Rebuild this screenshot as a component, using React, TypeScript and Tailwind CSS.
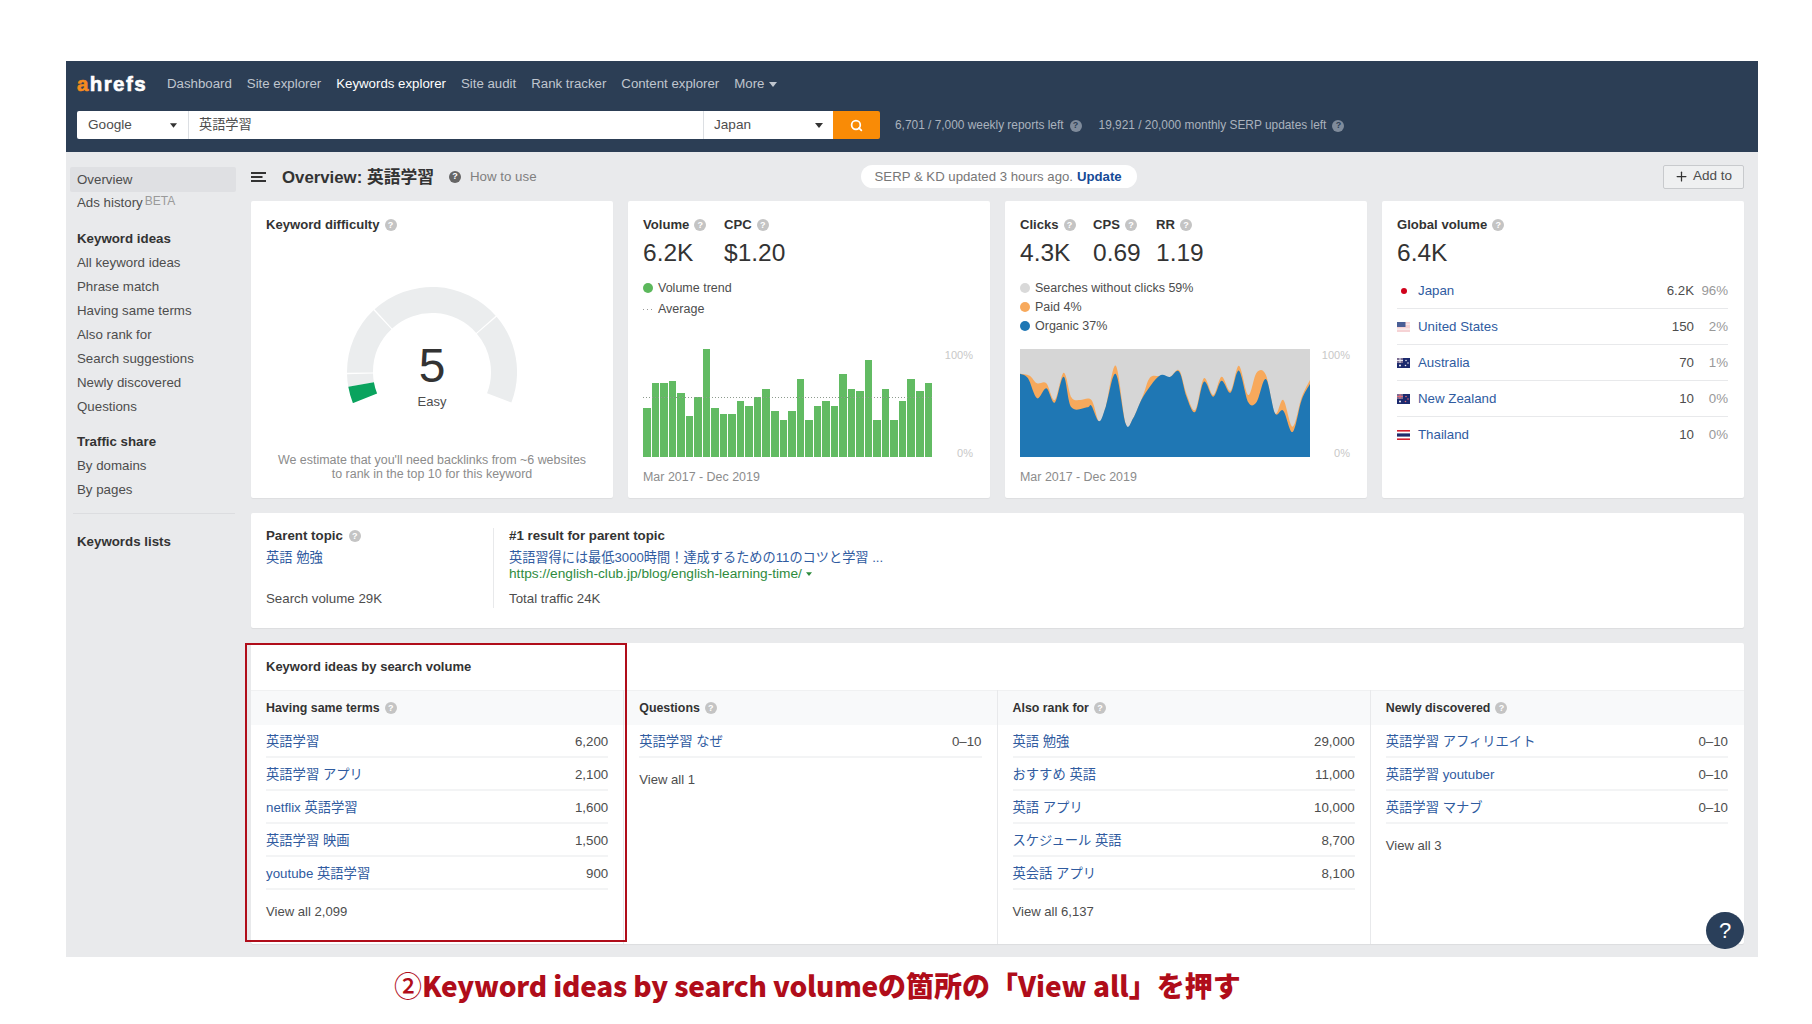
import { Search, Plus } from 'lucide-react'

const bars = [625, 550, 550, 543, 580, 648, 590, 447, 625, 642, 642, 602, 618, 590, 567, 632, 661, 632, 538, 661, 618, 602, 618, 521, 567, 573, 480, 661, 567, 661, 602, 538, 573, 550]

const organic: [number, number][] = [[61, 521], [85, 535], [112, 595], [140, 565], [165, 608], [192, 530], [215, 622], [262, 622], [275, 617], [298, 664], [318, 620], [348, 522], [378, 672], [400, 655], [430, 590], [478, 528], [510, 531], [538, 515], [560, 590], [586, 636], [612, 545], [640, 590], [665, 542], [692, 578], [717, 512], [745, 607], [770, 606], [798, 537], [825, 640], [850, 632], [878, 696], [905, 600], [930, 552]]
const paid: [number, number][] = [[61, 521], [90, 527], [112, 550], [140, 550], [165, 600], [192, 518], [215, 592], [240, 600], [275, 600], [298, 664], [318, 620], [348, 497], [378, 672], [400, 655], [430, 585], [450, 533], [478, 528], [510, 531], [538, 511], [560, 582], [586, 630], [612, 535], [640, 585], [665, 530], [692, 572], [717, 497], [745, 585], [770, 518], [798, 525], [825, 640], [850, 600], [878, 680], [905, 592], [930, 540]]

// smooth closed area from a list of top points
const areaPath = (pts: [number, number][]) => {
  let d = `M61 771 L${pts[0][0]} ${pts[0][1]}`
  for (let i = 0; i < pts.length - 1; i++) {
    const p0 = pts[Math.max(i - 1, 0)]
    const p1 = pts[i]
    const p2 = pts[i + 1]
    const p3 = pts[Math.min(i + 2, pts.length - 1)]
    d += ` C${p1[0] + (p2[0] - p0[0]) / 6} ${p1[1] + (p2[1] - p0[1]) / 6} ${p2[0] - (p3[0] - p1[0]) / 6} ${p2[1] - (p3[1] - p1[1]) / 6} ${p2[0]} ${p2[1]}`
  }
  return d + ' L930 771 Z'
}

const arcPath = (from: number, to: number) => {
  const pt = (r: number, a: number) => {
    const t = (a * Math.PI) / 180
    return `${85 + r * Math.cos(t)} ${85 + r * Math.sin(t)}`
  }
  const large = to - from > 180 ? 1 : 0
  return `M${pt(85, from)} A85 85 0 ${large} 1 ${pt(85, to)} L${pt(59, to)} A59 59 0 ${large} 0 ${pt(59, from)} Z`
}

function Help({ dark }: { dark?: boolean }) {
  return (
    <span className={`inline-flex h-3 w-3 shrink-0 items-center justify-center rounded-full text-[9px] leading-none font-bold ${dark ? 'bg-[#7f8b9b] text-[#2c3e55]' : 'bg-[#c4c4c4] text-white'}`}>
      ?
    </span>
  )
}

function Caret({ className }: { className: string }) {
  return (
    <svg viewBox="0 0 8 5" className={className}>
      <path d="M0 0h8L4 5z" fill="currentColor" />
    </svg>
  )
}

function Label({ text }: { text: string }) {
  return (
    <div className="flex h-4 items-center gap-[5px] text-[13.1px] font-bold text-[#333]">
      {text}
      <Help />
    </div>
  )
}

function Stat({ label, value, width }: { label: string; value: string; width: string }) {
  return (
    <div className={width}>
      <Label text={label} />
      <div className="mt-[6px] h-7 text-[24.5px] leading-7 text-[#333]">{value}</div>
    </div>
  )
}

function Side({ text, bold }: { text: string; bold?: boolean }) {
  return <div className={`flex h-6 items-center pl-[11px] text-[13.3px] ${bold ? 'font-bold text-[#333]' : 'text-[#4d4d4d]'}`}>{text}</div>
}

function Sidebar() {
  return (
    <aside className="w-[185px] shrink-0 pt-[15px]">
      <div className="ml-1 flex h-[25px] w-[166px] items-center rounded-[2px] bg-[#dfe0e3] pl-[7px] text-[13.3px] text-[#4d4d4d]">Overview</div>
      <div className="flex h-[22px] items-center pl-[11px] text-[13.3px] text-[#4d4d4d]">
        Ads history
        <span className="mb-[5px] ml-[2px] text-[12px] text-[#9a9a9a]">BETA</span>
      </div>
      <div className="mt-[13px]">
        <Side text="Keyword ideas" bold />
        <Side text="All keyword ideas" />
        <Side text="Phrase match" />
        <Side text="Having same terms" />
        <Side text="Also rank for" />
        <Side text="Search suggestions" />
        <Side text="Newly discovered" />
        <Side text="Questions" />
      </div>
      <div className="mt-[11px]">
        <Side text="Traffic share" bold />
        <Side text="By domains" />
        <Side text="By pages" />
      </div>
      <div className="mt-[11px] ml-[7px] w-[162px] border-t border-[#dcdde0]" />
      <div className="mt-4">
        <Side text="Keywords lists" bold />
      </div>
    </aside>
  )
}

function Header() {
  const nav = ['Dashboard', 'Site explorer', 'Keywords explorer', 'Site audit', 'Rank tracker', 'Content explorer']
  return (
    <header className="h-[91px] bg-[#2c3e55] pl-[11px]">
      <div className="flex h-[46px] items-center">
        <div className="w-[71px] text-[20.5px] leading-none font-bold tracking-[1.4px] [-webkit-text-stroke:0.6px_white] text-white">
          <span className="text-[#f68b1f] [-webkit-text-stroke:0.6px_#f68b1f]">a</span>hrefs
        </div>
        <nav className="ml-[19px] flex items-center gap-[15px] text-[13.25px] text-[#c0c6cf]">
          {nav.map(item => (
            <span key={item} className={item === 'Keywords explorer' ? 'text-white' : ''}>{item}</span>
          ))}
          <span className="flex items-center gap-[5px]">
            More
            <Caret className="h-[5px] w-[8px]" />
          </span>
        </nav>
      </div>
      <div className="mt-1 flex h-7 items-center">
        <div className="flex h-7 w-[111px] items-center justify-between rounded-l-[2px] bg-white pr-[11px] pl-[11px] text-[13.6px] text-[#4d4d4d]">
          Google
          <Caret className="h-[5px] w-[7px] text-[#333]" />
        </div>
        <div className="flex h-7 w-[516px] items-center border-x border-[#dcdfe3] bg-white pl-[10px] text-[13.2px] text-[#4d4d4d]">英語学習</div>
        <div className="flex h-7 w-[129px] items-center justify-between bg-white pr-[10px] pl-[10px] text-[13.6px] text-[#4d4d4d]">
          Japan
          <Caret className="h-[5px] w-[8px] text-[#333]" />
        </div>
        <div className="flex h-7 w-[47px] items-center justify-center rounded-r-[2px] bg-[#f98b06]">
          <Search className="h-[13px] w-[13px] text-white" strokeWidth={3.2} />
        </div>
        <div className="ml-[15px] flex items-center pt-[2px] text-[11.9px] text-[#aab2bd]">
          6,701 / 7,000 weekly reports left
          <span className="mr-[17px] ml-[6px] flex"><Help dark /></span>
          19,921 / 20,000 monthly SERP updates left
          <span className="ml-[6px] flex"><Help dark /></span>
        </div>
      </div>
    </header>
  )
}

function TitleRow() {
  return (
    <div className="flex h-[49px] items-center">
      <svg viewBox="0 0 15 10" className="h-[10px] w-[15px] text-[#333]">
        <path d="M0 1h15M0 5h11.5M0 9h15" stroke="currentColor" strokeWidth="1.8" />
      </svg>
      <h1 className="ml-4 pt-[2px] text-[16.8px] font-bold text-[#333]">Overview: 英語学習</h1>
      <span className="ml-[15px] flex h-3 w-3 items-center justify-center rounded-full bg-[#666] text-[9px] font-bold text-white">?</span>
      <span className="ml-[9px] text-[13.3px] text-[#808080]">How to use</span>
      <div className="ml-[324px] flex h-[23px] w-[276px] items-center rounded-full bg-white pl-[14px] text-[13.2px] text-[#777]">
        SERP &amp; KD updated 3 hours ago.
        <span className="ml-1 font-bold text-[#154a96]">Update</span>
      </div>
      <button className="ml-auto flex h-6 w-[81px] items-center justify-center gap-[4px] rounded-[2px] border border-[#c8cacd] bg-[#eff0f1] pr-px text-[13.5px] text-[#4d4d4d]">
        <Plus className="h-[15px] w-[15px] text-[#333]" strokeWidth={2} />
        Add to
      </button>
    </div>
  )
}

function DifficultyCard() {
  return (
    <section className="rounded-[2px] bg-white px-[15px] pt-4 shadow-[0_1px_1px_rgba(0,0,0,0.05)]">
      <Label text="Keyword difficulty" />
      <div className="relative mx-auto mt-[54px] h-[116px] w-[170px]">
        <svg viewBox="0 0 170 116" className="h-[116px] w-[170px]">
          <path d={arcPath(170, 178.5)} fill="#ebedee" />
          <path d={arcPath(179.5, 226.5)} fill="#ebedee" />
          <path d={arcPath(227.5, 318.5)} fill="#ebedee" />
          <path d={arcPath(319.5, 381)} fill="#ebedee" />
          <path d={arcPath(158.5, 170)} fill="#0aa35e" />
        </svg>
        <div className="absolute top-[55px] left-0 w-full text-center text-[48px] leading-[48px] text-[#333]">5</div>
        <div className="absolute top-[107px] left-0 w-full text-center text-[13px] leading-4 text-[#4d4d4d]">Easy</div>
      </div>
      <p className="mt-[50px] text-center text-[12.45px] leading-[14px] text-[#8c8c8c]">
        We estimate that you'll need backlinks from ~6 websites
        <br />
        to rank in the top 10 for this keyword
      </p>
    </section>
  )
}

function Percent() {
  return (
    <div className="flex h-[110px] w-[40px] flex-col justify-between text-right text-[11px] leading-3 text-[#c8c8c8]">
      <span>100%</span>
      <span>0%</span>
    </div>
  )
}

function Dot({ color, text }: { color: string; text: string }) {
  return (
    <div className="flex h-4 items-center text-[12.5px] text-[#4d4d4d]">
      <span className={`mr-[5px] h-[10px] w-[10px] rounded-full ${color}`} />
      {text}
    </div>
  )
}

function VolumeCard() {
  return (
    <section className="rounded-[2px] bg-white pt-4 pl-[15px] shadow-[0_1px_1px_rgba(0,0,0,0.05)]">
      <div className="flex">
        <Stat label="Volume" value="6.2K" width="w-[81px]" />
        <Stat label="CPC" value="$1.20" width="w-[100px]" />
      </div>
      <div className="mt-[13px]">
        <Dot color="bg-[#5cb85c]" text="Volume trend" />
        <div className="mt-[5px] flex h-4 items-center text-[12.5px] text-[#4d4d4d]">
          <svg viewBox="0 0 10 1" className="mr-[5px] h-px w-[10px]">
            <line x1="0" y1="0.5" x2="10" y2="0.5" stroke="#999" strokeDasharray="1 3" />
          </svg>
          Average
        </div>
      </div>
      <div className="mt-8 flex h-[108px]">
        <div className="relative flex w-[289px] items-end gap-px">
          {bars.map((top, i) => (
            <div key={i} className="flex-1 bg-[#62bb63]" style={{ height: (771 - top) / 3 }} />
          ))}
          <svg viewBox="0 0 289 1" className="absolute top-[48px] left-0 h-px w-[289px]">
            <line x1="0" y1="0.5" x2="289" y2="0.5" stroke="#8d9a8d" strokeDasharray="1 2" />
          </svg>
        </div>
        <div className="w-px" />
        <Percent />
      </div>
      <div className="mt-3 h-4 text-[12.45px] leading-4 text-[#8c8c8c]">Mar 2017 - Dec 2019</div>
    </section>
  )
}

function ClicksCard() {
  return (
    <section className="rounded-[2px] bg-white pt-4 pl-[15px] shadow-[0_1px_1px_rgba(0,0,0,0.05)]">
      <div className="flex">
        <Stat label="Clicks" value="4.3K" width="w-[73px]" />
        <Stat label="CPS" value="0.69" width="w-[63px]" />
        <Stat label="RR" value="1.19" width="w-[60px]" />
      </div>
      <div className="mt-[13px] flex flex-col gap-[3px]">
        <Dot color="bg-[#d9d9d9]" text="Searches without clicks 59%" />
        <Dot color="bg-[#f7a95c]" text="Paid 4%" />
        <Dot color="bg-[#1f77b4]" text="Organic 37%" />
      </div>
      <div className="mt-[15px] flex h-[108px]">
        <svg viewBox="61 447 869 324" preserveAspectRatio="none" className="h-[108px] w-[290px]">
          <rect x="61" y="447" width="869" height="324" fill="#d6d6d6" />
          <path d={areaPath(paid)} fill="#f7a95c" />
          <path d={areaPath(organic)} fill="#1f77b4" />
        </svg>
        <Percent />
      </div>
      <div className="mt-3 h-4 text-[12.45px] leading-4 text-[#8c8c8c]">Mar 2017 - Dec 2019</div>
    </section>
  )
}

function FlagUS() {
  return (
    <svg viewBox="0 0 13 10" className="h-[10px] w-[13px]">
      <rect width="13" height="10" fill="#f6d3d5" />
      <rect y="1.6" width="13" height="1.2" fill="#fbeeee" />
      <rect y="6.4" width="13" height="1.4" fill="#fbeeee" />
      <rect width="8.5" height="5" fill="#4a5f96" />
    </svg>
  )
}

function FlagAU({ star }: { star: string }) {
  return (
    <svg viewBox="0 0 13 10" className="h-[10px] w-[13px]">
      <rect width="13" height="10" fill="#1c2a6e" />
      <rect width="6" height="5" fill="#7d6f93" />
      <path d="M0 2.5h6M3 0v5" stroke={star} strokeWidth="1" />
      <circle cx="9" cy="2.5" r="0.8" fill={star} />
      <circle cx="11" cy="5" r="0.8" fill={star} />
      <circle cx="8.5" cy="7.5" r="0.8" fill={star} />
      <circle cx="3" cy="7.5" r="1" fill="#fff" />
    </svg>
  )
}

function FlagTH() {
  return (
    <svg viewBox="0 0 13 10" className="h-[10px] w-[13px]">
      <rect width="13" height="10" fill="#fff" />
      <rect width="13" height="1.6" fill="#d5202f" />
      <rect y="8.4" width="13" height="1.6" fill="#d5202f" />
      <rect y="3.4" width="13" height="3.2" fill="#1f2a6b" />
    </svg>
  )
}

const countries = [
  { name: 'Japan', value: '6.2K', pct: '96%', flag: <span className="ml-1 block h-[6px] w-[6px] rounded-full bg-[#d0021b]" /> },
  { name: 'United States', value: '150', pct: '2%', flag: <FlagUS /> },
  { name: 'Australia', value: '70', pct: '1%', flag: <FlagAU star="#e8e8f0" /> },
  { name: 'New Zealand', value: '10', pct: '0%', flag: <FlagAU star="#e36a78" /> },
  { name: 'Thailand', value: '10', pct: '0%', flag: <FlagTH /> },
]

function GlobalCard() {
  return (
    <section className="rounded-[2px] bg-white pt-4 pr-4 pl-[15px] shadow-[0_1px_1px_rgba(0,0,0,0.05)]">
      <Stat label="Global volume" value="6.4K" width="w-full" />
      <div className="mt-[6px]">
        {countries.map((c, i) => (
          <div key={c.name} className={`flex h-9 items-center text-[13.3px] ${i < 4 ? 'border-b border-[#e8e9eb]' : ''}`}>
            <span className="flex w-[21px] shrink-0 items-center">{c.flag}</span>
            <span className="text-[#2f5b9f]">{c.name}</span>
            <span className="ml-auto text-[#4d4d4d]">{c.value}</span>
            <span className="w-[34px] text-right text-[#999]">{c.pct}</span>
          </div>
        ))}
      </div>
    </section>
  )
}

function ParentCard() {
  return (
    <section className="mt-[15px] flex h-[115px] rounded-[2px] bg-white pt-[15px] shadow-[0_1px_1px_rgba(0,0,0,0.06)]">
      <div className="h-[80px] w-[243px] border-r border-[#e8e9eb] pl-[15px] text-[13.3px] leading-4">
        <div className="flex items-center gap-[6px] font-bold text-[#333]">Parent topic <Help /></div>
        <div className="mt-[6px] text-[#2f5b9f]">英語 勉強</div>
        <div className="mt-[25px] text-[#4d4d4d]">Search volume 29K</div>
      </div>
      <div className="pl-[15px] text-[13.3px] leading-4">
        <div className="font-bold text-[#333]">#1 result for parent topic</div>
        <div className="mt-[6px] text-[13.2px] text-[#2f5b9f]">英語習得には最低3000時間！達成するための11のコツと学習 ...</div>
        <div className="flex items-center gap-1 text-[13.7px] text-[#2e8b3d]">
          https://english-club.jp/blog/english-learning-time/
          <Caret className="h-1 w-[6px]" />
        </div>
        <div className="mt-[9px] text-[#4d4d4d]">Total traffic 24K</div>
      </div>
    </section>
  )
}

const columns = [
  {
    title: 'Having same terms',
    rows: [['英語学習', '6,200'], ['英語学習 アプリ', '2,100'], ['netflix 英語学習', '1,600'], ['英語学習 映画', '1,500'], ['youtube 英語学習', '900']],
    more: 'View all 2,099',
  },
  { title: 'Questions', rows: [['英語学習 なぜ', '0–10']], more: 'View all 1' },
  {
    title: 'Also rank for',
    rows: [['英語 勉強', '29,000'], ['おすすめ 英語', '11,000'], ['英語 アプリ', '10,000'], ['スケジュール 英語', '8,700'], ['英会話 アプリ', '8,100']],
    more: 'View all 6,137',
  },
  {
    title: 'Newly discovered',
    rows: [['英語学習 アフィリエイト', '0–10'], ['英語学習 youtuber', '0–10'], ['英語学習 マナブ', '0–10']],
    more: 'View all 3',
  },
]

function IdeasCard() {
  return (
    <section className="relative mt-[15px] flex h-[301px] flex-col rounded-[2px] bg-white shadow-[0_1px_1px_rgba(0,0,0,0.06)]">
      <div className="flex h-[47px] items-center pl-[15px] text-[13px] font-bold text-[#333]">Keyword ideas by search volume</div>
      <div className="grid flex-1 grid-cols-4">
        {columns.map((col, i) => (
          <div key={col.title} className={i > 0 ? '-ml-px border-l border-[#e8e9eb]' : ''}>
            <div className="flex h-[35px] items-center gap-[5px] border-t border-[#f0f1f2] bg-[#f8f9fa] pl-[15px] text-[12.4px] font-bold text-[#333]">
              {col.title}
              <Help />
            </div>
            <div className="pr-4 pl-[15px]">
              {col.rows.map(([name, value]) => (
                <div key={name} className="flex h-[33px] items-center justify-between border-b-2 border-[#f3f4f5] pt-[2px] text-[13.3px]">
                  <span className="text-[#2f5b9f]">{name}</span>
                  <span className="text-[#4d4d4d]">{value}</span>
                </div>
              ))}
              <div className="mt-[15px] text-[13.1px] leading-[14px] text-[#4d4d4d]">{col.more}</div>
            </div>
          </div>
        ))}
      </div>
      <div className="absolute top-0 -left-[6px] h-[299px] w-[382px] border-2 border-[#b00d1a]" />
      <div className="absolute right-0 -bottom-[5px] flex h-[37px] w-[38px] items-center justify-center rounded-full bg-[#2a3f5a] text-[22px] text-white">?</div>
    </section>
  )
}

export default function App() {
  return (
    <div className="h-[1024px] w-[1812px] overflow-hidden bg-white pt-[61px] pl-[66px] [font-family:'Liberation_Sans','Noto_Sans_CJK_JP',sans-serif]">
      <div className="h-[896px] w-[1692px] bg-[#e9eaec]">
        <Header />
        <div className="flex">
          <Sidebar />
          <main className="w-[1493px]">
            <TitleRow />
            <div className="grid h-[297px] grid-cols-4 gap-[15px]">
              <DifficultyCard />
              <VolumeCard />
              <ClicksCard />
              <GlobalCard />
            </div>
            <ParentCard />
            <IdeasCard />
          </main>
        </div>
      </div>
      <div className="ml-[328px] flex h-[56px] items-center text-[28px] font-black text-[#b00d1a] [font-family:'Noto_Sans_CJK_JP',sans-serif]">
        <span className="font-medium">②</span>
        <span className="tracking-[-0.2px]">Keyword ideas by search volume</span>
        <span>の箇所の「View all」を押す</span>
      </div>
    </div>
  )
}
